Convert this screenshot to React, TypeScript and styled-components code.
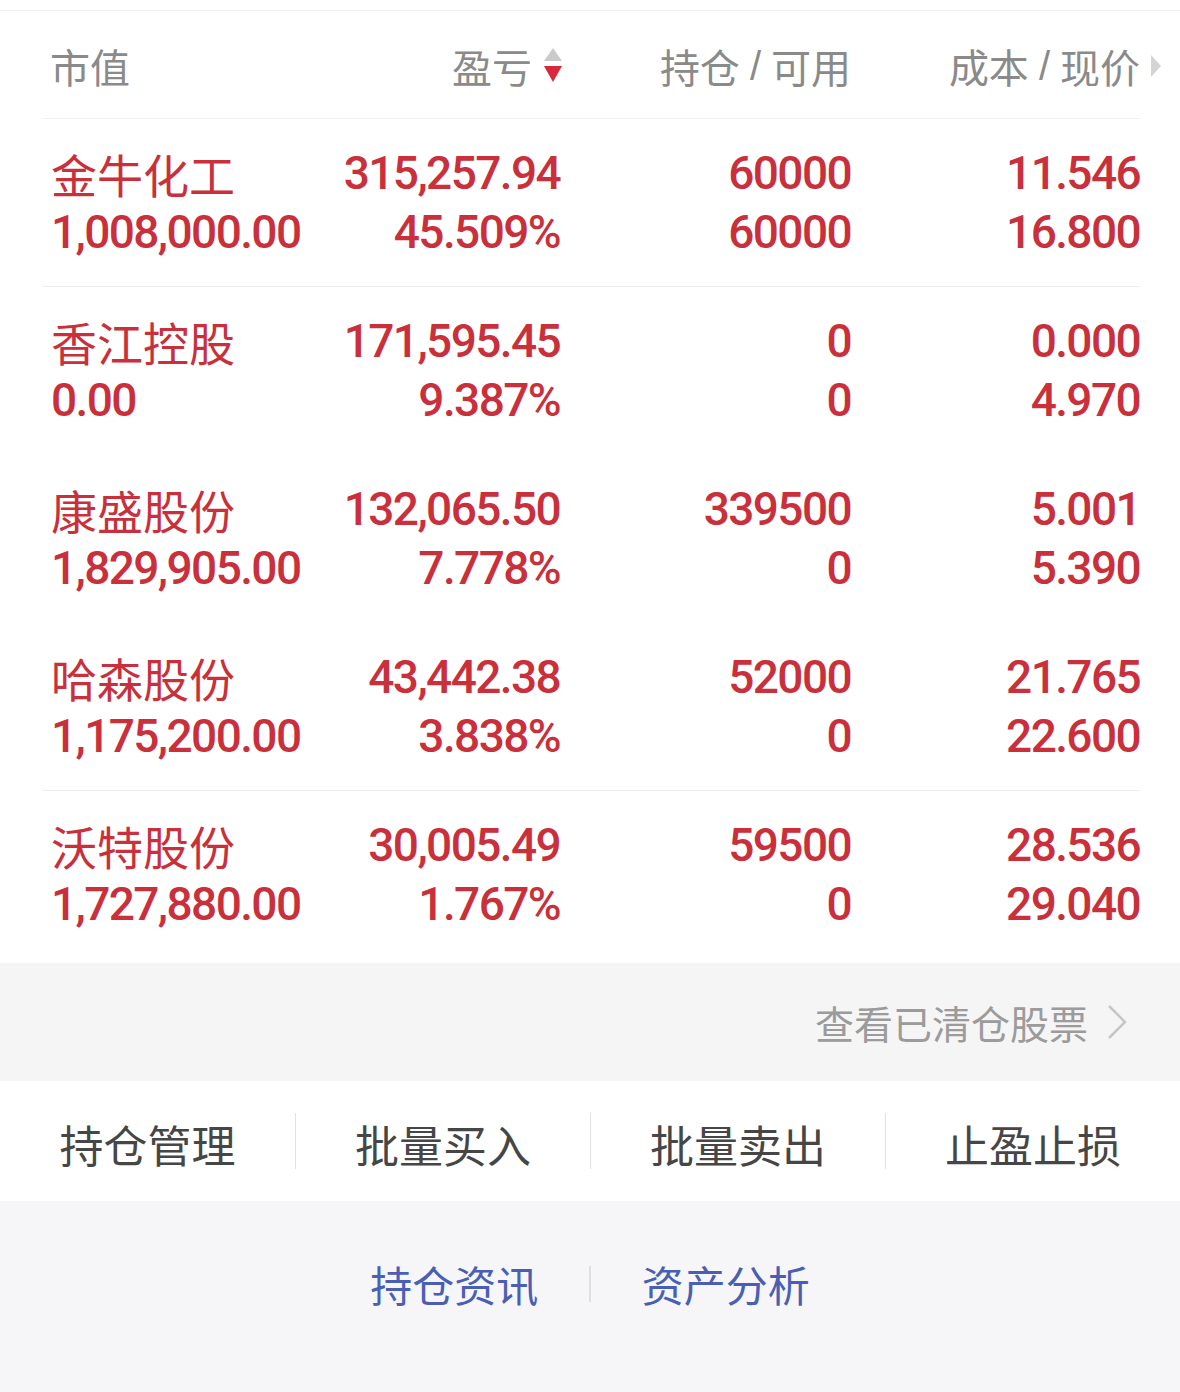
import React from 'react';
import styled, { createGlobalStyle } from 'styled-components';

const GlobalStyle = createGlobalStyle`
  html, body {
    margin: 0;
    padding: 0;
    background: #ffffff;
  }
  body {
    font-family: "Noto Sans CJK SC", "Noto Sans", sans-serif;
  }
`;

const RED = '#c9303b';

const Page = styled.div`
  width: 1180px;
  min-height: 1392px;
  padding-top: 10px;
  box-sizing: border-box;
  display: flex;
  flex-direction: column;
  background: #fff;
`;

const Table = styled.div`
  border-top: 1px solid #f0f0f0;
  padding: 0 40px 4px 42px;
`;

const Grid = styled.div`
  display: grid;
  grid-template-columns: 260px 258px 291px 289px;
  box-sizing: border-box;
`;

const HeaderRow = styled(Grid)`
  height: 108px;
  align-items: center;
  border-bottom: 1px solid #f0f0f0;
  padding-top: 2px;
`;

const HeadCell = styled.div<{ $align?: 'left' | 'right' }>`
  display: flex;
  align-items: center;
  justify-content: ${({ $align }) => ($align === 'left' ? 'flex-start' : 'flex-end')};
  padding-left: ${({ $align }) => ($align === 'left' ? '8px' : '0')};
  font-size: 40px;
  line-height: 56px;
  color: #8a8a8a;
  white-space: nowrap;
`;

const Slash = styled.span`
  font-family: "Liberation Sans", sans-serif;
  font-weight: 300;
  margin: 0 10px;
`;

const SortIcon = styled.svg`
  width: 20px;
  height: 40px;
  margin-left: 11px;
  margin-right: -3px;
`;

const MoreIcon = styled.svg`
  width: 12px;
  height: 24px;
  margin-left: 10px;
  margin-right: -22px;
`;

const Row = styled(Grid)<{ $divider?: boolean }>`
  height: 168px;
  align-items: center;
  border-bottom: 1px solid ${({ $divider }) => ($divider ? '#eeeeee' : 'transparent')};
`;

const Cell = styled.div<{ $align?: 'left' | 'right' }>`
  display: flex;
  flex-direction: column;
  align-items: ${({ $align }) => ($align === 'left' ? 'flex-start' : 'flex-end')};
  padding-left: ${({ $align }) => ($align === 'left' ? '9px' : '0')};
  white-space: nowrap;
`;

const Name = styled.span`
  font-family: "Noto Sans CJK SC", sans-serif;
  font-size: 46px;
  line-height: 59px;
  color: ${RED};
`;

const Num = styled.span`
  font-family: Roboto, "Liberation Sans", sans-serif;
  font-weight: 500;
  font-size: 46px;
  line-height: 59px;
  letter-spacing: -1.6px;
  color: ${RED};
`;

const ClearedBar = styled.div`
  background: #f5f5f5;
  height: 118px;
  display: flex;
  align-items: center;
  justify-content: flex-end;
  padding-right: 52px;
`;

const ClearedLink = styled.span`
  font-size: 39px;
  color: #9b9b9b;
  line-height: 50px;
  margin-right: 18px;
`;

const Chevron = styled.svg`
  width: 22px;
  height: 36px;
`;

const ActionBar = styled.div`
  height: 120px;
  display: grid;
  grid-template-columns: repeat(4, 1fr);
  align-items: center;
  background: #fff;
`;

const Action = styled.div<{ $first?: boolean }>`
  text-align: center;
  font-size: 44px;
  line-height: 50px;
  color: #464646;
  padding-top: 6px;
  border-left: ${({ $first }) => ($first ? 'none' : '1.5px solid #e2e2e2')};
`;

const Footer = styled.div`
  flex: 1;
  background: #f6f6f8;
  display: flex;
  justify-content: center;
  align-items: flex-start;
  padding-top: 58px;
`;

const FooterLinks = styled.div`
  display: flex;
  align-items: center;
`;

const FooterLink = styled.span`
  font-size: 42px;
  line-height: 50px;
  color: #4a5fb4;
`;

const FooterSep = styled.span`
  width: 1.5px;
  height: 36px;
  background: #e0e0e0;
  margin: 0 51px;
`;

type Holding = {
  name: string;
  value: string;
  profit: string;
  ratio: string;
  position: string;
  available: string;
  cost: string;
  price: string;
  divider?: boolean;
};

const holdings: Holding[] = [
  { name: '金牛化工', value: '1,008,000.00', profit: '315,257.94', ratio: '45.509%', position: '60000', available: '60000', cost: '11.546', price: '16.800', divider: true },
  { name: '香江控股', value: '0.00', profit: '171,595.45', ratio: '9.387%', position: '0', available: '0', cost: '0.000', price: '4.970' },
  { name: '康盛股份', value: '1,829,905.00', profit: '132,065.50', ratio: '7.778%', position: '339500', available: '0', cost: '5.001', price: '5.390' },
  { name: '哈森股份', value: '1,175,200.00', profit: '43,442.38', ratio: '3.838%', position: '52000', available: '0', cost: '21.765', price: '22.600', divider: true },
  { name: '沃特股份', value: '1,727,880.00', profit: '30,005.49', ratio: '1.767%', position: '59500', available: '0', cost: '28.536', price: '29.040' },
];

const actions = ['持仓管理', '批量买入', '批量卖出', '止盈止损'];

const App: React.FC = () => {
  return (
    <>
      <GlobalStyle />
      <Page>
        <Table>
          <HeaderRow>
            <HeadCell $align="left">市值</HeadCell>
            <HeadCell>
              盈亏
              <SortIcon viewBox="0 0 20 40">
                <polygon points="1,15 19,15 10,2" fill="#cacaca" />
                <polygon points="1,20 19,20 10,36" fill="#d8283a" />
              </SortIcon>
            </HeadCell>
            <HeadCell>
              持仓<Slash>/</Slash>可用
            </HeadCell>
            <HeadCell>
              成本<Slash>/</Slash>现价
              <MoreIcon viewBox="0 0 12 24">
                <polygon points="1,1 11,12 1,23" fill="#d4d4d4" />
              </MoreIcon>
            </HeadCell>
          </HeaderRow>

          {holdings.map((h) => (
            <Row key={h.name} $divider={h.divider}>
              <Cell $align="left">
                <Name>{h.name}</Name>
                <Num>{h.value}</Num>
              </Cell>
              <Cell>
                <Num>{h.profit}</Num>
                <Num>{h.ratio}</Num>
              </Cell>
              <Cell>
                <Num>{h.position}</Num>
                <Num>{h.available}</Num>
              </Cell>
              <Cell>
                <Num>{h.cost}</Num>
                <Num>{h.price}</Num>
              </Cell>
            </Row>
          ))}
        </Table>

        <ClearedBar>
          <ClearedLink>查看已清仓股票</ClearedLink>
          <Chevron viewBox="0 0 22 36">
            <polyline points="3,2 19,18 3,34" fill="none" stroke="#c6c6c6" strokeWidth="2.5" />
          </Chevron>
        </ClearedBar>

        <ActionBar>
          {actions.map((a, i) => (
            <Action key={a} $first={i === 0}>
              {a}
            </Action>
          ))}
        </ActionBar>

        <Footer>
          <FooterLinks>
            <FooterLink>持仓资讯</FooterLink>
            <FooterSep />
            <FooterLink>资产分析</FooterLink>
          </FooterLinks>
        </Footer>
      </Page>
    </>
  );
};

export default App;
